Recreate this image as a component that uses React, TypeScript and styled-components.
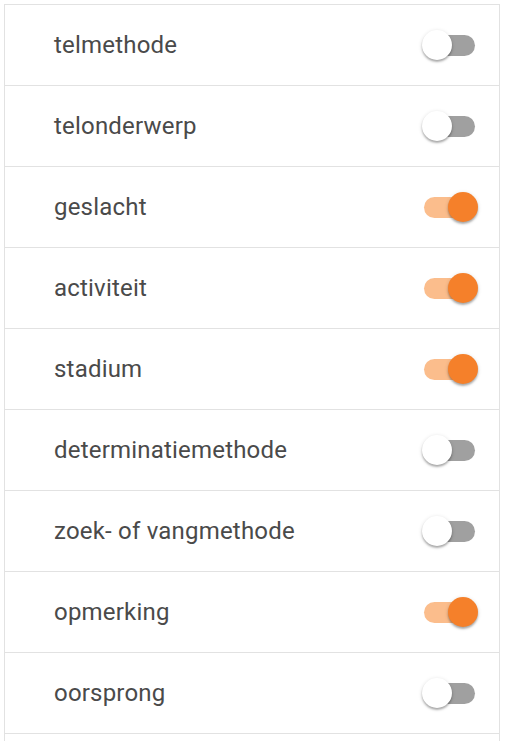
import React, { useState } from 'react';
import styled, { createGlobalStyle } from 'styled-components';

const GlobalStyle = createGlobalStyle`
  html, body {
    margin: 0;
    padding: 0;
    background: #ffffff;
    font-family: Roboto, "Noto Sans", Arial, sans-serif;
  }
`;

const Page = styled.div`
  padding: 4px 6px 0 4px;
`;

const List = styled.ul`
  list-style: none;
  margin: 0;
  padding: 0 0 40px;
  border: 1px solid #e2e2e2;
  border-bottom: none;
`;

const Row = styled.li`
  height: 80px;
  display: flex;
  align-items: center;
  justify-content: space-between;
  padding: 0 24px 0 49px;
  border-bottom: 1px solid #e2e2e2;
  box-sizing: content-box;
`;

const Label = styled.span`
  font-size: 24px;
  letter-spacing: 0.2px;
  color: #4a4a4a;
`;

const Track = styled.button<{ $on: boolean }>`
  position: relative;
  width: 51px;
  height: 21px;
  padding: 0;
  border: none;
  border-radius: 11px;
  cursor: pointer;
  background: ${(p) => (p.$on ? '#fbbd8c' : '#a0a0a0')};
`;

const Thumb = styled.span<{ $on: boolean }>`
  position: absolute;
  top: 50%;
  left: ${(p) => (p.$on ? '24px' : '-2px')};
  width: 30px;
  height: 30px;
  margin-top: -15px;
  border-radius: 50%;
  background: ${(p) => (p.$on ? '#f5802a' : '#ffffff')};
  box-shadow: 0 2px 2px rgba(0, 0, 0, 0.2), 0 1px 4px rgba(0, 0, 0, 0.14),
    0 2px 3px -1px rgba(0, 0, 0, 0.12);
  transition: left 0.15s;
`;

const initial: [string, boolean][] = [
  ['telmethode', false],
  ['telonderwerp', false],
  ['geslacht', true],
  ['activiteit', true],
  ['stadium', true],
  ['determinatiemethode', false],
  ['zoek- of vangmethode', false],
  ['opmerking', true],
  ['oorsprong', false],
];

export default function App() {
  const [items, setItems] = useState(initial);
  const toggle = (i: number) =>
    setItems((prev) => prev.map((it, j) => (j === i ? [it[0], !it[1]] : it)));

  return (
    <Page>
      <GlobalStyle />
      <List>
        {items.map(([name, on], i) => (
          <Row key={name}>
            <Label>{name}</Label>
            <Track $on={on} onClick={() => toggle(i)} aria-pressed={on}>
              <Thumb $on={on} />
            </Track>
          </Row>
        ))}
      </List>
    </Page>
  );
}
